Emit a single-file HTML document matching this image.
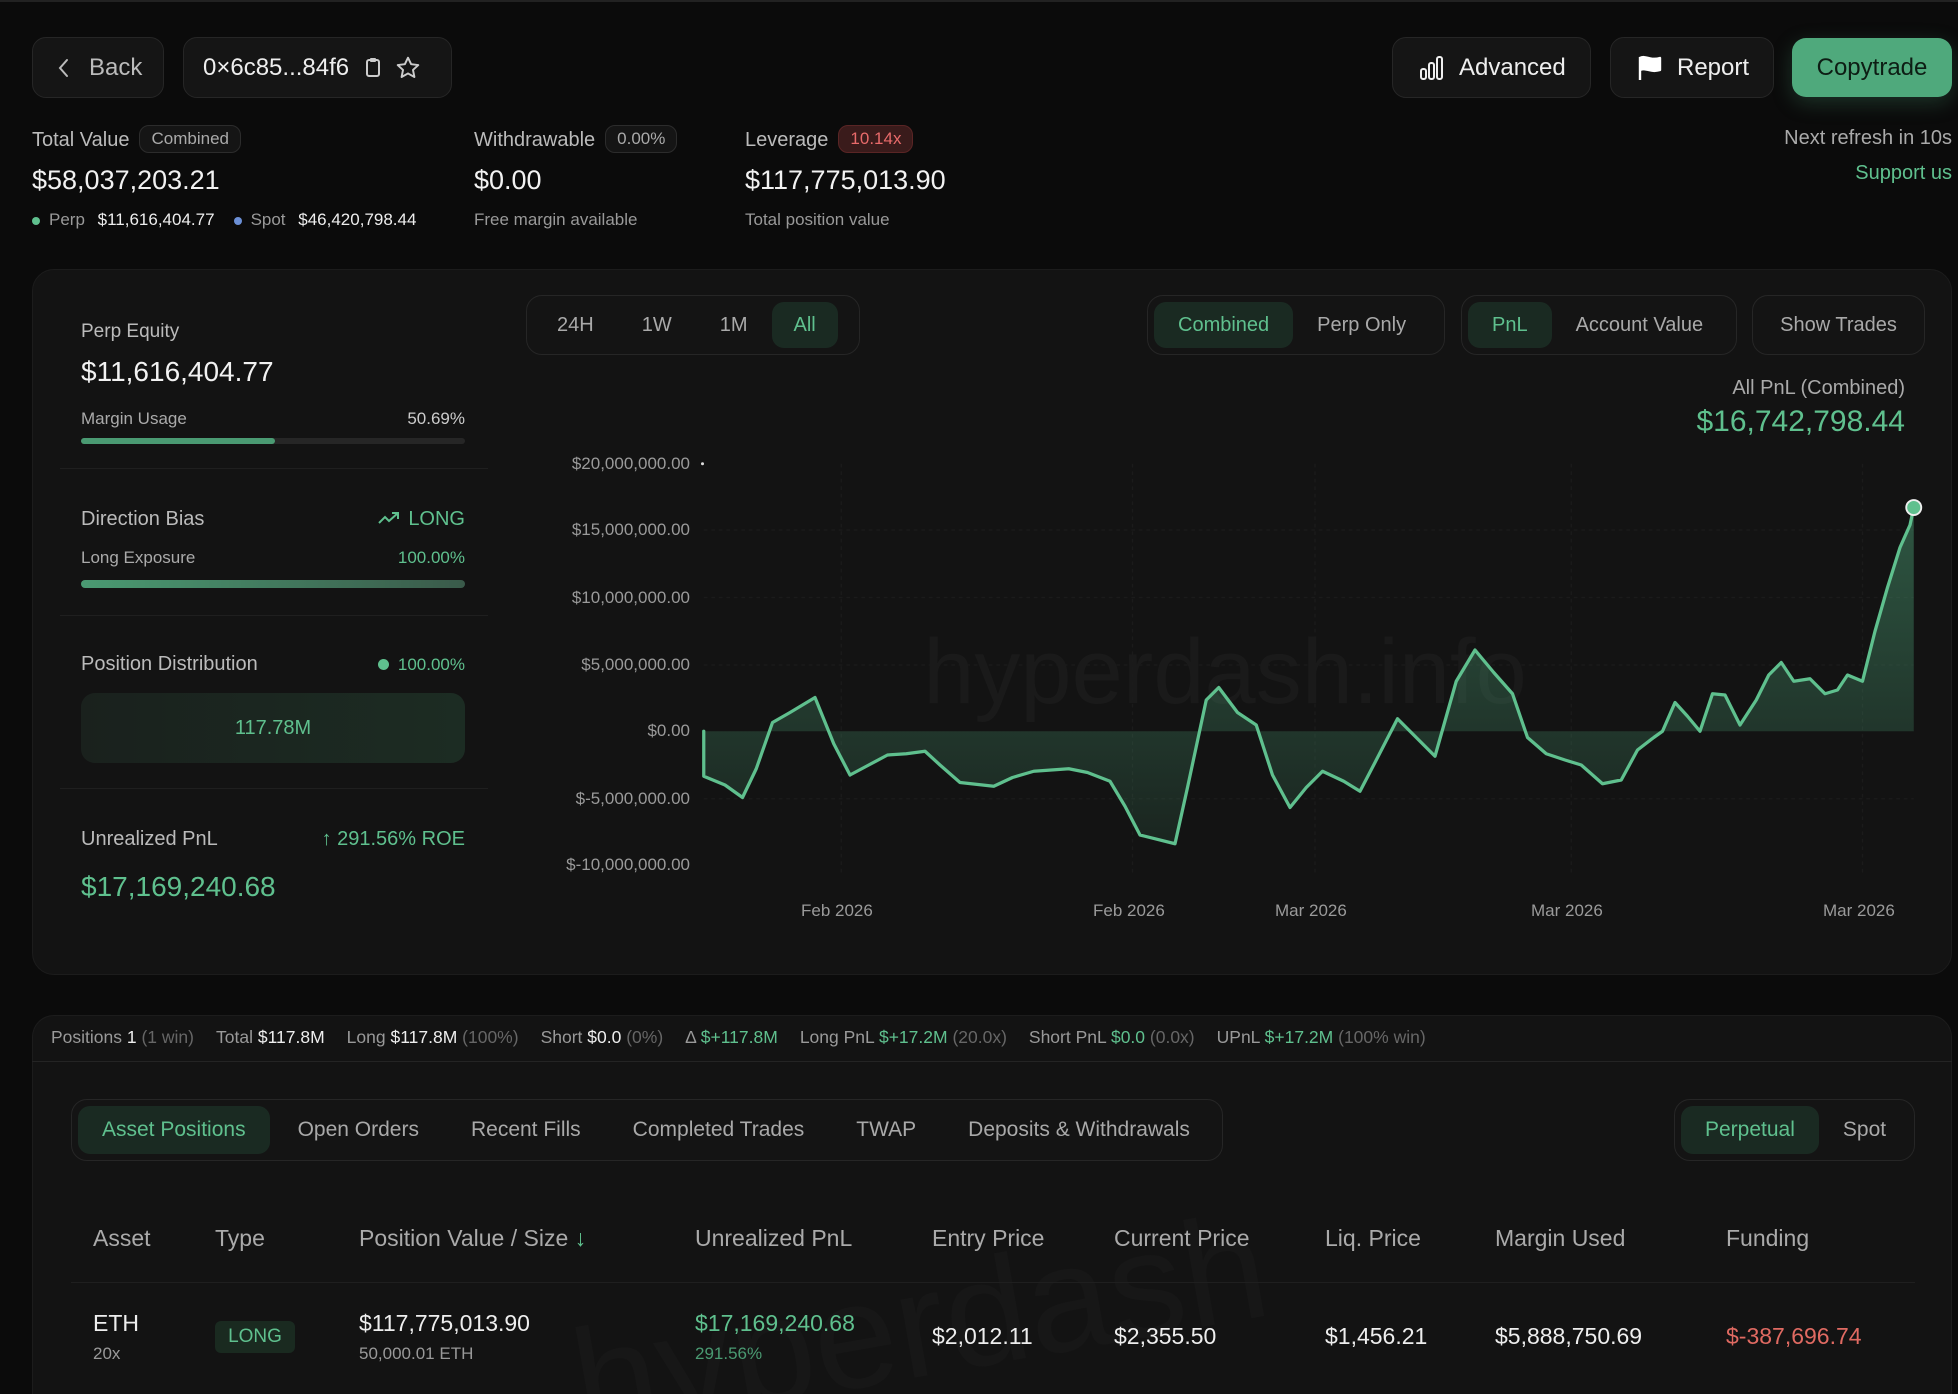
<!DOCTYPE html>
<html style="overflow:hidden;width:1958px;height:1394px"><head><meta charset="utf-8"><style>
*{box-sizing:border-box;margin:0;padding:0}
body{width:1958px;height:1394px;background:#0b0b0b;font-family:"Liberation Sans",sans-serif;color:#e8e8e8;position:relative;overflow:hidden}
.a{position:absolute;white-space:nowrap}
.btn{position:absolute;background:#151515;border:1px solid #262626;border-radius:14px;display:flex;align-items:center;font-size:23px;color:#eee;white-space:nowrap}
.g{color:#5fc08e}
.mut{color:#9a9a9a}
.pill{position:absolute;border:1px solid #262626;border-radius:16px;background:#141414;display:flex;align-items:center;padding:6px;font-size:20px;color:#a9a9a9;white-space:nowrap}
.pill span{padding:0 24px;height:100%;display:flex;align-items:center;border-radius:12px}
.pill span.on{background:#1a2a22;color:#5fc08e}
.badge{display:inline-block;border:1px solid #2c2c2c;border-radius:10px;padding:3px 11px;font-size:17px;color:#aaa;background:#151515;margin-left:10px;vertical-align:2px}
.sb span.k{margin-left:22px}
</style></head><body>
<div class="a" style="left:0;top:0;width:1958px;height:2px;background:#222"></div>

<div class="btn" style="left:32px;top:37px;width:132px;height:61px;padding-left:22px">
<svg width="18" height="22" viewBox="0 0 18 22"><path d="M12 3 L5 11 L12 19" stroke="#bbb" stroke-width="2" fill="none" stroke-linecap="round"/></svg>
<span style="margin-left:16px;color:#bbb;font-size:24px">Back</span></div>
<div class="btn" style="left:183px;top:37px;width:269px;height:61px;padding-left:19px">
<span style="font-size:24px">0×6c85...84f6</span>
<svg style="margin-left:14px" width="20" height="24" viewBox="0 0 20 24"><rect x="4" y="4" width="12" height="16" rx="2" stroke="#ccc" stroke-width="2" fill="none"/><rect x="7" y="2" width="6" height="4" rx="1" fill="#ccc"/></svg>
<svg style="margin-left:12px" width="26" height="26" viewBox="0 0 24 24"><path d="M12 2.5l2.9 6 6.6.8-4.9 4.5 1.3 6.5L12 17l-5.9 3.3 1.3-6.5L2.5 9.3l6.6-.8z" stroke="#ccc" stroke-width="1.8" fill="none" stroke-linejoin="round"/></svg>
</div>

<div class="btn" style="left:1392px;top:37px;width:199px;height:61px;padding-left:26px">
<svg width="26" height="26" viewBox="0 0 26 26"><rect x="2" y="14" width="5" height="10" rx="2" stroke="#eee" stroke-width="2" fill="none"/><rect x="10" y="8" width="5" height="16" rx="2" stroke="#eee" stroke-width="2" fill="none"/><rect x="18" y="2" width="5" height="22" rx="2" stroke="#eee" stroke-width="2" fill="none"/></svg>
<span style="margin-left:14px;font-size:24px">Advanced</span></div>
<div class="btn" style="left:1610px;top:37px;width:164px;height:61px;padding-left:26px">
<svg width="26" height="28" viewBox="0 0 26 28"><path d="M3 26V3 M3 4c6-3 10 3 20 0v12c-10 3-14-3-20 0z" stroke="#fff" stroke-width="2.4" fill="#fff" stroke-linejoin="round"/></svg>
<span style="margin-left:14px;font-size:24px">Report</span></div>
<div class="btn" style="left:1792px;top:38px;width:160px;height:59px;background:#4fa97c;border:none;justify-content:center;color:#0d1d14;font-size:24px;box-shadow:0 6px 20px rgba(79,169,124,0.25)">Copytrade</div>

<div class="a" style="left:32px;top:125px;font-size:20px;color:#bbb">Total Value<span class="badge">Combined</span></div>
<div class="a" style="left:32px;top:165px;font-size:27px;color:#f2f2f2">$58,037,203.21</div>
<div class="a" style="left:32px;top:210px;font-size:17px;color:#999"><span style="display:inline-block;width:8px;height:8px;border-radius:50%;background:#5fc08e;margin-right:9px"></span>Perp <span style="color:#eee;margin-left:8px">$11,616,404.77</span><span style="display:inline-block;width:8px;height:8px;border-radius:50%;background:#6b8fd6;margin:0 9px 0 19px"></span>Spot <span style="color:#eee;margin-left:8px">$46,420,798.44</span></div>

<div class="a" style="left:474px;top:125px;font-size:20px;color:#bbb">Withdrawable<span class="badge">0.00%</span></div>
<div class="a" style="left:474px;top:165px;font-size:27px;color:#f2f2f2">$0.00</div>
<div class="a" style="left:474px;top:210px;font-size:17px;color:#999">Free margin available</div>

<div class="a" style="left:745px;top:125px;font-size:20px;color:#bbb">Leverage<span class="badge" style="background:#3a1b1b;border-color:#5a2525;color:#e76a6a">10.14x</span></div>
<div class="a" style="left:745px;top:165px;font-size:27px;color:#f2f2f2">$117,775,013.90</div>
<div class="a" style="left:745px;top:210px;font-size:17px;color:#999">Total position value</div>

<div class="a" style="right:6px;top:127px;font-size:20px;color:#aaa">Next refresh in 10s</div>
<div class="a g" style="right:6px;top:162px;font-size:20px">Support us</div>

<!-- main panel -->
<div class="a" style="left:32px;top:269px;width:1920px;height:706px;background:#131313;border:1px solid #1c1c1c;border-radius:22px"></div>

<div class="a" style="left:81px;top:321px;font-size:19px;color:#bbb">Perp Equity</div>
<div class="a" style="left:81px;top:356px;font-size:28px;color:#f2f2f2">$11,616,404.77</div>
<div class="a" style="left:81px;top:409px;font-size:17px;color:#aaa">Margin Usage</div>
<div class="a" style="right:1493px;top:409px;font-size:17px;color:#ccc">50.69%</div>
<div class="a" style="left:81px;top:438px;width:384px;height:6px;border-radius:3px;background:#262626"><div style="width:194px;height:6px;border-radius:3px;background:#4a9a72"></div></div>
<div class="a" style="left:60px;top:468px;width:428px;height:1px;background:#1f1f1f"></div>

<div class="a" style="left:81px;top:508px;font-size:20px;color:#bbb">Direction Bias</div>
<div class="a g" style="right:1493px;top:508px;font-size:20px"><svg width="22" height="14" viewBox="0 0 22 14" style="margin-right:8px"><path d="M1 12l6-6 4 4 9-8M14 2h6v6" stroke="#5fc08e" stroke-width="2" fill="none"/></svg>LONG</div>
<div class="a" style="left:81px;top:548px;font-size:17px;color:#aaa">Long Exposure</div>
<div class="a g" style="right:1493px;top:548px;font-size:17px">100.00%</div>
<div class="a" style="left:81px;top:580px;width:384px;height:8px;border-radius:4px;background:linear-gradient(90deg,#4a9a72,#3a5a4a)"></div>
<div class="a" style="left:60px;top:615px;width:428px;height:1px;background:#1f1f1f"></div>

<div class="a" style="left:81px;top:653px;font-size:20px;color:#bbb">Position Distribution</div>
<div class="a g" style="right:1493px;top:655px;font-size:17px"><span style="display:inline-block;width:11px;height:11px;border-radius:50%;background:#5fc08e;margin-right:9px"></span>100.00%</div>
<div class="a" style="left:81px;top:693px;width:384px;height:70px;border-radius:14px;background:linear-gradient(90deg,#1a211d,#1c2c23);display:flex;align-items:center;justify-content:center;font-size:20px;color:#5fc08e">117.78M</div>
<div class="a" style="left:60px;top:788px;width:428px;height:1px;background:#1f1f1f"></div>

<div class="a" style="left:81px;top:828px;font-size:20px;color:#bbb">Unrealized PnL</div>
<div class="a g" style="right:1493px;top:828px;font-size:20px">↑ 291.56% ROE</div>
<div class="a g" style="left:81px;top:871px;font-size:28px">$17,169,240.68</div>

<div class="pill" style="left:526px;top:295px;width:334px;height:60px"><span>24H</span><span>1W</span><span>1M</span><span class="on" style="padding:0 22px">All</span></div>
<div class="pill" style="left:1147px;top:295px;width:298px;height:60px"><span class="on">Combined</span><span>Perp Only</span></div>
<div class="pill" style="left:1461px;top:295px;width:276px;height:60px"><span class="on">PnL</span><span>Account Value</span></div>
<div class="pill" style="left:1752px;top:295px;width:173px;height:60px;justify-content:center"><span style="padding:0">Show Trades</span></div>

<div class="a" style="right:53px;top:377px;font-size:20px;color:#aaa">All PnL (Combined)</div>
<div class="a g" style="right:53px;top:405px;font-size:30px">$16,742,798.44</div>

<div class="a" style="left:575px;top:620px;width:1300px;text-align:center;font-size:92px;color:#1a1a1a">hyperdash.info</div>

<div class="a mut" style="right:1268px;top:454px;font-size:17px">$20,000,000.00</div>
<div class="a mut" style="right:1268px;top:520px;font-size:17px">$15,000,000.00</div>
<div class="a mut" style="right:1268px;top:588px;font-size:17px">$10,000,000.00</div>
<div class="a mut" style="right:1268px;top:655px;font-size:17px">$5,000,000.00</div>
<div class="a mut" style="right:1268px;top:721px;font-size:17px">$0.00</div>
<div class="a mut" style="right:1268px;top:789px;font-size:17px">$-5,000,000.00</div>
<div class="a mut" style="right:1268px;top:855px;font-size:17px">$-10,000,000.00</div>

<div class="a mut" style="left:801px;top:901px;font-size:17px">Feb 2026</div>
<div class="a mut" style="left:1093px;top:901px;font-size:17px">Feb 2026</div>
<div class="a mut" style="left:1275px;top:901px;font-size:17px">Mar 2026</div>
<div class="a mut" style="left:1531px;top:901px;font-size:17px">Mar 2026</div>
<div class="a mut" style="left:1823px;top:901px;font-size:17px">Mar 2026</div>

<svg class="a" style="left:0;top:0" width="1958" height="1394" viewBox="0 0 1566.4 1115.2">
<defs><linearGradient id="gr" x1="0" y1="0" x2="0" y2="1"><stop offset="0" stop-color="#4fa97c" stop-opacity="0.45"/><stop offset="1" stop-color="#4fa97c" stop-opacity="0.12"/></linearGradient></defs>
<g stroke="#1b1b1b" stroke-width="1" stroke-dasharray="3 3">
<line x1="673" y1="371" x2="673" y2="700"/><line x1="906" y1="371" x2="906" y2="700"/><line x1="1052" y1="371" x2="1052" y2="700"/><line x1="1257" y1="371" x2="1257" y2="700"/><line x1="1490" y1="371" x2="1490" y2="700"/>
<line x1="563" y1="424" x2="1531" y2="424"/><line x1="563" y1="478" x2="1531" y2="478"/><line x1="563" y1="532" x2="1531" y2="532"/><line x1="563" y1="639" x2="1531" y2="639"/>
</g>
<circle cx="562" cy="371" r="1.2" fill="#ddd"/>
<path fill="url(#gr)" d="M563,585 L563,621 580,628 594,638 605,615 618,578 632,570 652,558 667,595 680,620 695,612 710,604 725,603 740,601 752,612 768,626 795,629 810,622 827,617 855,615 870,618 888,625 900,645 912,668 940,675 950,630 965,560 975,550 990,570 1005,580 1018,620 1032,646 1045,630 1058,617 1075,625 1088,633 1100,610 1118,575 1133,590 1148,605 1165,545 1180,520 1195,538 1210,555 1222,590 1237,603 1252,608 1265,612 1282,627 1297,624 1310,600 1323,590 1330,585 1340,562 1350,573 1360,585 1370,555 1380,556 1392,580 1405,560 1415,540 1425,530 1435,545 1448,543 1460,555 1470,552 1478,540 1490,545 1500,505 1510,470 1520,438 1528,420 1531,406 L1531,585Z"/>
<polyline fill="none" stroke="#5fc08e" stroke-width="2.6" stroke-linejoin="round" stroke-linecap="round" points="563,585 563,621 580,628 594,638 605,615 618,578 632,570 652,558 667,595 680,620 695,612 710,604 725,603 740,601 752,612 768,626 795,629 810,622 827,617 855,615 870,618 888,625 900,645 912,668 940,675 950,630 965,560 975,550 990,570 1005,580 1018,620 1032,646 1045,630 1058,617 1075,625 1088,633 1100,610 1118,575 1133,590 1148,605 1165,545 1180,520 1195,538 1210,555 1222,590 1237,603 1252,608 1265,612 1282,627 1297,624 1310,600 1323,590 1330,585 1340,562 1350,573 1360,585 1370,555 1380,556 1392,580 1405,560 1415,540 1425,530 1435,545 1448,543 1460,555 1470,552 1478,540 1490,545 1500,505 1510,470 1520,438 1528,420 1531,406"/>
<circle cx="1531" cy="406" r="6" fill="#5fc08e" stroke="#eee" stroke-width="1.5"/>
</svg>

<!-- bottom panel -->
<div class="a" style="left:32px;top:1015px;width:1920px;height:379px;background:#131313;border:1px solid #1c1c1c;border-bottom:none;border-radius:22px 22px 0 0"></div>
<div class="a" style="left:32px;top:1061px;width:1920px;height:1px;background:#242424"></div>
<div class="a sb" style="left:51px;top:1027px;font-size:17.5px;color:#999">Positions <span style="color:#eee">1</span> <span style="color:#666">(1 win)</span><span class="k">Total</span> <span style="color:#eee">$117.8M</span><span class="k">Long</span> <span style="color:#eee">$117.8M</span> <span style="color:#666">(100%)</span><span class="k">Short</span> <span style="color:#eee">$0.0</span> <span style="color:#666">(0%)</span><span class="k">Δ</span> <span class="g">$+117.8M</span><span class="k">Long PnL</span> <span class="g">$+17.2M</span> <span style="color:#666">(20.0x)</span><span class="k">Short PnL</span> <span class="g">$0.0</span> <span style="color:#666">(0.0x)</span><span class="k">UPnL</span> <span class="g">$+17.2M</span> <span style="color:#666">(100% win)</span></div>

<div class="a" style="left:560px;top:1300px;font-size:150px;color:#171717;transform:rotate(-10deg);transform-origin:left top">hyperdash</div>

<div class="pill" style="left:71px;top:1099px;width:1152px;height:62px;font-size:21px"><span class="on">Asset Positions</span><span style="padding:0 28px">Open Orders</span><span style="padding:0 24px">Recent Fills</span><span style="padding:0 28px">Completed Trades</span><span>TWAP</span><span style="padding:0 28px">Deposits &amp; Withdrawals</span></div>
<div class="pill" style="left:1674px;top:1099px;width:241px;height:62px;font-size:21px"><span class="on">Perpetual</span><span>Spot</span></div>

<div class="a" style="top:1225px;left:0;font-size:23px;color:#aaa;width:1958px;height:30px">
<span class="a" style="left:93px">Asset</span><span class="a" style="left:215px">Type</span><span class="a" style="left:359px">Position Value / Size <span class="g">↓</span></span><span class="a" style="left:695px">Unrealized PnL</span><span class="a" style="left:932px">Entry Price</span><span class="a" style="left:1114px">Current Price</span><span class="a" style="left:1325px">Liq. Price</span><span class="a" style="left:1495px">Margin Used</span><span class="a" style="left:1726px">Funding</span></div>
<div class="a" style="left:71px;top:1282px;width:1844px;height:1px;background:#1f1f1f"></div>

<div class="a" style="left:93px;top:1310px;font-size:23px;color:#eee">ETH</div>
<div class="a" style="left:93px;top:1344px;font-size:17px;color:#999">20x</div>
<div class="a" style="left:215px;top:1321px;width:80px;height:32px;border-radius:6px;background:#1a2a20;color:#5fc08e;font-size:19px;display:flex;align-items:center;justify-content:center">LONG</div>
<div class="a" style="left:359px;top:1310px;font-size:23px;color:#eee">$117,775,013.90</div>
<div class="a" style="left:359px;top:1344px;font-size:17px;color:#999">50,000.01 ETH</div>
<div class="a g" style="left:695px;top:1310px;font-size:23px">$17,169,240.68</div>
<div class="a" style="left:695px;top:1344px;font-size:17px;color:#4a9a72">291.56%</div>
<div class="a" style="left:932px;top:1323px;font-size:23px;color:#eee">$2,012.11</div>
<div class="a" style="left:1114px;top:1323px;font-size:23px;color:#eee">$2,355.50</div>
<div class="a" style="left:1325px;top:1323px;font-size:23px;color:#eee">$1,456.21</div>
<div class="a" style="left:1495px;top:1323px;font-size:23px;color:#eee">$5,888,750.69</div>
<div class="a" style="left:1726px;top:1323px;font-size:23px;color:#e06a62">$-387,696.74</div>
</body></html>
